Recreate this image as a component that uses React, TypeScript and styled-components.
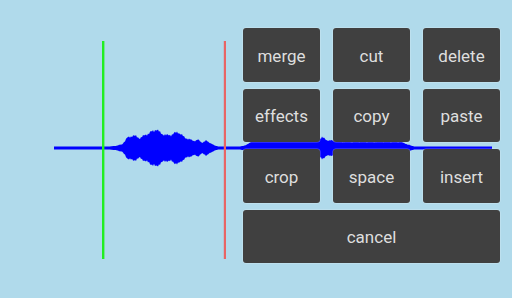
import React from "react";
import styled, { createGlobalStyle } from "styled-components";

const GlobalStyle = createGlobalStyle`
  html, body {
    margin: 0;
    padding: 0;
    background: #b0daeb;
  }
  body {
    font-family: Roboto, "Liberation Sans", sans-serif;
  }
`;

const BASE_Y = 148;

// envelope of the clip: [x, half-height]
const envelope: [number, number][] = [
  [54, 1.5], [110, 1.5], [116, 2.5], [122, 4], [127, 11], [133, 14],
  [140, 11], [146, 15], [152, 18], [156, 21], [160, 17], [166, 14],
  [172, 15], [178, 18], [183, 13], [188, 10], [194, 8], [198, 9],
  [202, 6], [206, 8], [210, 6], [214, 3], [218, 1.5], [240, 1.5],
  [246, 3], [252, 8], [262, 9], [300, 9], [318, 10], [322, 12],
  [326, 9], [340, 7], [400, 7], [410, 3], [414, 1.5], [492, 1.5],
];

const ampAt = (x: number) => {
  for (let i = 0; i < envelope.length - 1; i++) {
    const [x0, a0] = envelope[i];
    const [x1, a1] = envelope[i + 1];
    if (x >= x0 && x <= x1) return a0 + ((a1 - a0) * (x - x0)) / (x1 - x0);
  }
  return 1.5;
};

const wavePath = () => {
  const top: string[] = [];
  const bottom: string[] = [];
  for (let x = 54; x <= 492; x++) {
    const a = ampAt(x);
    const jitter = a > 2 ? 0.9 + 0.12 * Math.sin(x * 1.7) * Math.cos(x * 0.9) : 1;
    top.push(`${x},${(BASE_Y - a * jitter).toFixed(1)}`);
    bottom.unshift(`${x},${(BASE_Y + a * jitter).toFixed(1)}`);
  }
  return `M${top.join(" L")} L${bottom.join(" L")} Z`;
};

const WAVE = wavePath();

const Screen = styled.div`
  position: relative;
  width: 512px;
  height: 298px;
  overflow: hidden;
  display: flex;
  justify-content: flex-end;
`;

const Track = styled.svg`
  position: absolute;
  inset: 0;
  pointer-events: none;
`;

const Panel = styled.div`
  position: relative;
  display: grid;
  grid-template-columns: repeat(3, 77px);
  grid-auto-rows: 53.5px;
  column-gap: 13px;
  row-gap: 7px;
  padding: 28px 12px 0 0;
  align-content: start;
`;

const Button = styled.button<{ $wide?: boolean }>`
  grid-column: ${(p) => (p.$wide ? "1 / -1" : "auto")};
  margin: 0;
  padding: 2px 0 0;
  border: none;
  border-radius: 3px;
  background: #404040;
  color: #dedede;
  font-family: Roboto, "Liberation Sans", sans-serif;
  font-size: 17px;
  box-shadow: 0 0 0 0.5px rgba(255, 255, 255, 0.35);
`;

const labels = ["merge", "cut", "delete", "effects", "copy", "paste", "crop", "space", "insert"];

export default function App() {
  return (
    <>
      <GlobalStyle />
      <Screen>
        <Track width="512" height="298" viewBox="0 0 512 298">
          <path d={WAVE} fill="#0000ff" />
          <rect x="102" y="41" width="2.4" height="218" fill="#22ee22" />
          <rect x="223.8" y="41" width="2.2" height="218" fill="#e86464" />
        </Track>
        <Panel>
          {labels.map((l) => (
            <Button key={l}>{l}</Button>
          ))}
          <Button $wide>cancel</Button>
        </Panel>
      </Screen>
    </>
  );
}
